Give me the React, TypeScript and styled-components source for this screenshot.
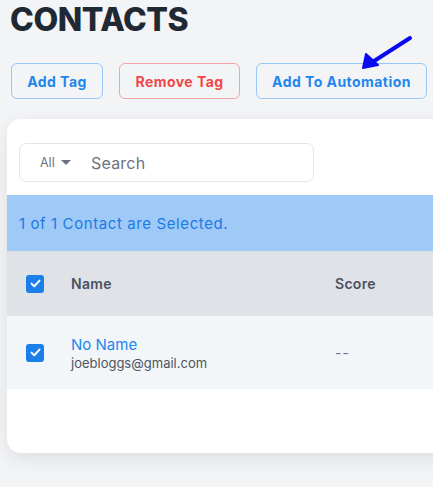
import React from "react";
import styled, { createGlobalStyle } from "styled-components";

const GlobalStyle = createGlobalStyle`
  html, body {
    margin: 0;
    padding: 0;
    background: #f3f4f6;
    overflow: hidden;
  }
  body {
    font-family: Inter, "Noto Sans", sans-serif;
  }
`;

const Page = styled.div`
  position: relative;
  width: 433px;
  height: 487px;
  overflow: hidden;
  padding: 0 0 0 7px;
  box-sizing: border-box;
`;

const Title = styled.h1`
  margin: 0;
  padding: 2px 0 0 3px;
  font-size: 32px;
  line-height: 36px;
  font-weight: 800;
  color: #1f2933;
  letter-spacing: -0.4px;
`;

const Toolbar = styled.div`
  display: flex;
  gap: 16px;
  margin: 25px 0 0 4px;
`;

const ActionButton = styled.button<{ $danger?: boolean; $width: number }>`
  height: 36px;
  width: ${(p) => p.$width}px;
  border-radius: 6px;
  background: transparent;
  border: 1px solid ${(p) => (p.$danger ? "#f7a3a3" : "#98c8f8")};
  color: ${(p) => (p.$danger ? "#f04848" : "#1f86ee")};
  font-family: inherit;
  font-size: 14px;
  font-weight: 700;
  letter-spacing: 0.45px;
  padding: 0;
`;

const Card = styled.div`
  margin-top: 20px;
  width: 520px;
  height: 334px;
  background: #fff;
  border-radius: 14px;
  box-shadow: 0 6px 18px rgba(30, 45, 70, 0.1);
  overflow: hidden;
  padding-top: 24px;
  box-sizing: border-box;
`;

const SearchBox = styled.div`
  margin-left: 12px;
  width: 295px;
  height: 39px;
  border: 1px solid #e2e5ea;
  border-radius: 7px;
  box-sizing: border-box;
  display: flex;
  align-items: center;
  padding-left: 20px;
`;

const Filter = styled.div`
  display: flex;
  align-items: center;
  gap: 6px;
  font-size: 12.5px;
  color: #6b7280;
  width: 51px;
`;

const Caret = styled.span`
  width: 0;
  height: 0;
  border-left: 5px solid transparent;
  border-right: 5px solid transparent;
  border-top: 5px solid #6b7280;
`;

const SearchText = styled.span`
  font-size: 16px;
  color: #6b7280;
  letter-spacing: 0.2px;
`;

const Banner = styled.div`
  margin-top: 13px;
  height: 56px;
  background: #9fc9f6;
  display: flex;
  align-items: center;
  padding-left: 12px;
  font-size: 15px;
  letter-spacing: 0.6px;
  color: #1b7be6;
`;

const Row = styled.div<{ $head?: boolean }>`
  display: grid;
  grid-template-columns: 45px 264px 1fr;
  align-items: center;
  height: ${(p) => (p.$head ? 65 : 73)}px;
  background: ${(p) => (p.$head ? "#dfe2e7" : "#f3f6f9")};
  padding-left: 19px;
`;

const Check = styled.span`
  width: 18px;
  height: 18px;
  border-radius: 3px;
  background: #1a7fe9;
  display: flex;
  align-items: center;
  justify-content: center;
`;

const HeadCell = styled.div`
  font-size: 14px;
  font-weight: 600;
  letter-spacing: 0.3px;
  color: #4a5260;
`;

const NameCell = styled.div`
  display: flex;
  flex-direction: column;
  gap: 1px;
`;

const ContactName = styled.span`
  font-size: 15px;
  color: #2187ee;
`;

const Email = styled.span`
  font-size: 13px;
  color: #4b5563;
`;

const Dash = styled.div`
  font-size: 14px;
  color: #6b7280;
  letter-spacing: 1px;
`;

const Pointer = styled.svg`
  position: absolute;
  left: 355px;
  top: 30px;
`;

function Checkbox() {
  return (
    <Check>
      <svg width="11" height="9" viewBox="0 0 11 9">
        <path d="M1.5 4.6 L4.2 7.2 L9.5 1.6" fill="none" stroke="#fff" strokeWidth="2" strokeLinecap="round" strokeLinejoin="round" />
      </svg>
    </Check>
  );
}

export default function App() {
  return (
    <>
      <GlobalStyle />
      <Page>
        <Title>CONTACTS</Title>
        <Toolbar>
          <ActionButton $width={92}>Add Tag</ActionButton>
          <ActionButton $danger $width={121}>Remove Tag</ActionButton>
          <ActionButton $width={171}>Add To Automation</ActionButton>
        </Toolbar>
        <Card>
          <SearchBox>
            <Filter>
              All <Caret />
            </Filter>
            <SearchText>Search</SearchText>
          </SearchBox>
          <Banner>1 of 1 Contact are Selected.</Banner>
          <Row $head>
            <Checkbox />
            <HeadCell>Name</HeadCell>
            <HeadCell>Score</HeadCell>
          </Row>
          <Row>
            <Checkbox />
            <NameCell>
              <ContactName>No Name</ContactName>
              <Email>joebloggs@gmail.com</Email>
            </NameCell>
            <Dash>--</Dash>
          </Row>
        </Card>
        <Pointer width="62" height="44" viewBox="0 0 62 44">
          <line x1="55" y1="8" x2="16" y2="33" stroke="#0a0af0" strokeWidth="4" strokeLinecap="round" />
          <polygon points="8,38 11,24 23,35" fill="#0a0af0" stroke="#0a0af0" strokeWidth="2" strokeLinejoin="round" />
        </Pointer>
      </Page>
    </>
  );
}
